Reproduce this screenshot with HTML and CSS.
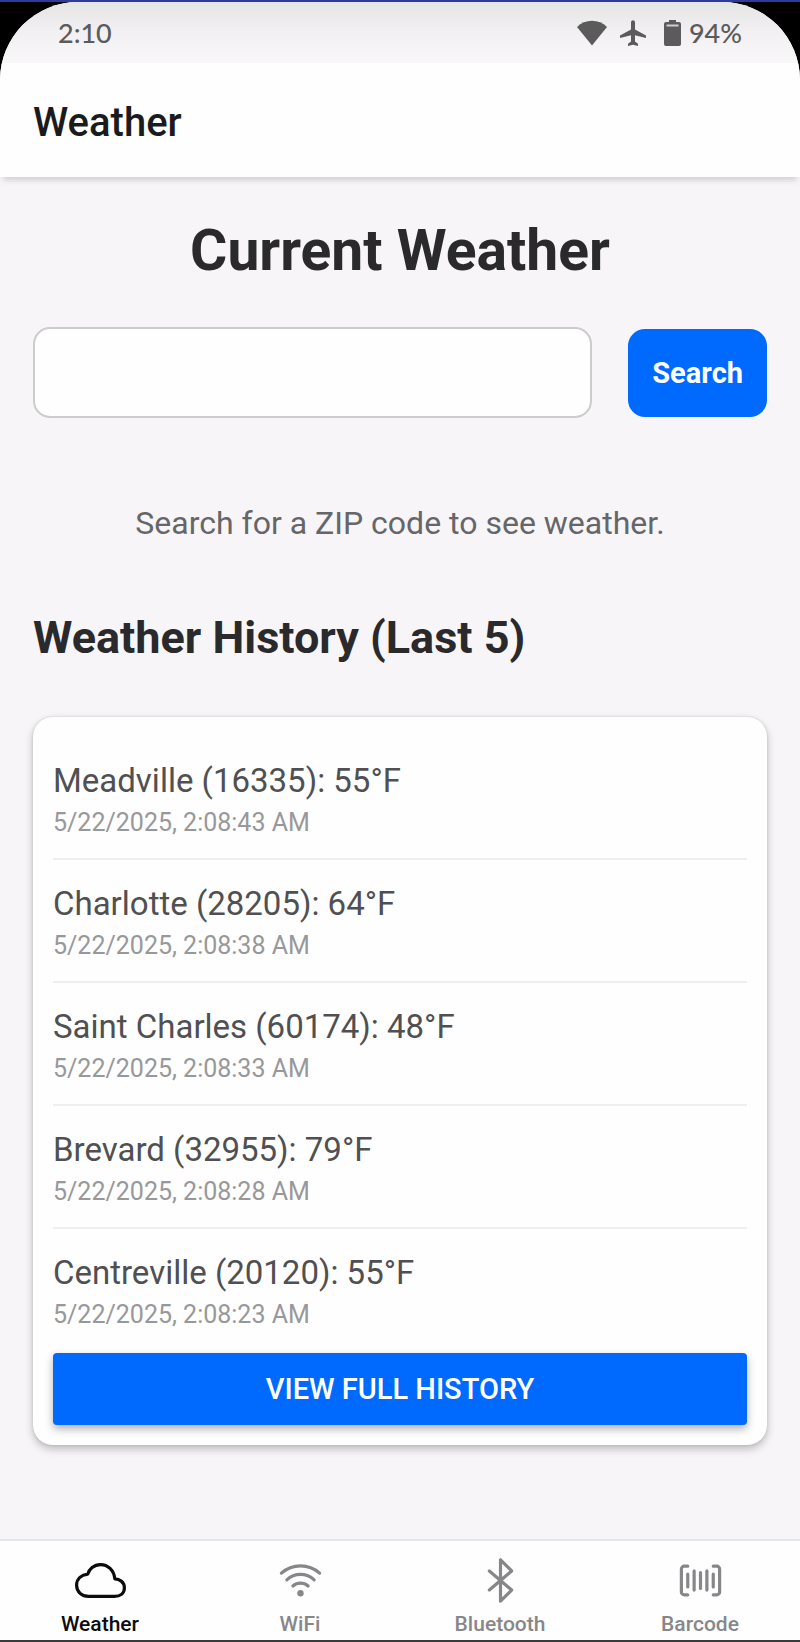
FILE: index.html
```html
<!DOCTYPE html>
<html lang="en">
<head>
<meta charset="utf-8">
<meta name="viewport" content="width=device-width, initial-scale=1">
<title>Weather</title>
<link rel="stylesheet" href="styles.css">
</head>
<body>
<div class="screen">
  <div class="status-bar">
    <span class="clock">2:10</span>
    <div class="status-icons">
      <svg class="status-wifi" viewBox="0 0 30 26" aria-hidden="true"><path d="M0 7C8-1.500 22-1.500 30 7L15 25.500z"/></svg>
      <svg class="status-plane" viewBox="0 0 26 26" aria-hidden="true"><path d="M11 2.200a2 2 0 0 1 4 0V9.500L26 15.500V18L15 15.200V21.500L18 23.800V26L13 24.800L8 26V23.800L11 21.500V15.200L0 18V15.500L11 9.500z"/></svg>
      <svg class="status-battery" viewBox="0 0 17 26" aria-hidden="true"><path d="M5 0h7v2h3a2 2 0 0 1 2 2v20a2 2 0 0 1-2 2H2a2 2 0 0 1-2-2V4a2 2 0 0 1 2-2h3z"/><path class="battery-gap" d="M2.500 4.500h12v2h-12z"/></svg>
      <span>94%</span>
    </div>
  </div>
  <header class="app-header"><div class="app-title">Weather</div></header>
  <main class="content">
    <h1 class="heading">Current Weather</h1>
    <form class="search">
      <input class="search-input" type="text" inputmode="numeric" aria-label="ZIP code">
      <button class="search-button" type="button">Search</button>
    </form>
    <p class="hint">Search for a ZIP code to see weather.</p>
    <h2 class="subheading">Weather History (Last 5)</h2>
    <section class="card">
      <ul class="history">
        <li class="entry"><div class="place">Meadville (16335): 55°F</div><div class="time">5/22/2025, 2:08:43 AM</div></li>
        <li class="entry"><div class="place">Charlotte (28205): 64°F</div><div class="time">5/22/2025, 2:08:38 AM</div></li>
        <li class="entry"><div class="place">Saint Charles (60174): 48°F</div><div class="time">5/22/2025, 2:08:33 AM</div></li>
        <li class="entry"><div class="place">Brevard (32955): 79°F</div><div class="time">5/22/2025, 2:08:28 AM</div></li>
        <li class="entry"><div class="place">Centreville (20120): 55°F</div><div class="time">5/22/2025, 2:08:23 AM</div></li>
      </ul>
      <button class="history-button" type="button">VIEW FULL HISTORY</button>
    </section>
  </main>
  <nav class="tabs">
    <a class="tab tab-active" href="#weather" aria-current="page">
      <svg class="tab-icon" viewBox="0 0 512 512" aria-hidden="true"><path d="M400 240c-8.890-89.540-71-144-144-144-69 0-113.440 48.200-128 96-60 6-112 43.590-112 112 0 66 54 112 120 112h260c55 0 100-27.440 100-88 0-59.820-53-85.760-96-88z"/></svg>
      <span>Weather</span>
    </a>
    <a class="tab" href="#wifi">
      <svg class="tab-icon" viewBox="0 0 512 512" aria-hidden="true"><path d="M332.410 310.590a115 115 0 0 0-152.800 0M393.460 249.540a201.260 201.260 0 0 0-274.920 0M447.720 182.110a288 288 0 0 0-383.440 0"/><circle class="dot" cx="256" cy="384" r="32"/></svg>
      <span>WiFi</span>
    </a>
    <a class="tab" href="#bluetooth">
      <svg class="tab-icon" viewBox="0 0 512 512" aria-hidden="true"><path d="M144 352l224-192L256 48v416l112-112-224-192"/></svg>
      <span>Bluetooth</span>
    </a>
    <a class="tab" href="#barcode">
      <svg class="tab-icon" viewBox="0 0 512 512" aria-hidden="true"><path d="M384 400h35a29 29 0 0 0 29-29V141a29 29 0 0 0-29-29h-35M128 112H93a29 29 0 0 0-29 29v230a29 29 0 0 0 29 29h35M384 192v128M320 160v192M256 176v160M192 160v192M128 192v128"/></svg>
      <span>Barcode</span>
    </a>
  </nav>
</div>
</body>
</html>
```
FILE: styles.css
```css
*, *::before, *::after { box-sizing: border-box; }

body {
  margin: 0;
  min-height: 100vh;
  display: flex;
  background: #000;
  border-top: 2px solid #2b3c9e;
  border-bottom: 2px solid #3a3a3a;
  font-family: Roboto, "Liberation Sans", sans-serif;
  color: #2a2a2c;
}

h1, h2, p, ul { margin: 0; padding: 0; }
button, input { font: inherit; }

.screen {
  flex: 1;
  min-width: 0;
  display: flex;
  flex-direction: column;
  background: #f7f5f8;
  border-radius: 78px 78px 0 0;
  overflow: hidden;
}

.status-bar {
  display: flex;
  justify-content: space-between;
  align-items: center;
  height: 61px;
  padding: 0 58px;
  background: linear-gradient(#e6e5e6, #f2f0f2 50%, #f9f8f9);
  font-family: Lato, Roboto, sans-serif;
  font-size: 27px;
  font-weight: 500;
  line-height: 34px;
  color: #5b5b5b;
}

.status-icons { display: flex; align-items: center; }
.status-icons svg { height: 26px; fill: #5b5b5b; }
.status-wifi { width: 30px; margin-right: 13px; }
.status-plane { width: 26px; margin-right: 18px; }
.status-battery { width: 17px; margin-right: 8px; }
.status-icons .battery-gap { fill: #d0d0d0; }

.app-header {
  padding: 36px 33px 30px;
  background: #fefefe;
  box-shadow: 0 6px 6px -3px rgba(0, 0, 0, 0.16);
}

.app-title {
  font-size: 40px;
  font-weight: 500;
  line-height: 48px;
  color: #1b1b1d;
}

.content { flex: 1; padding: 40px 33px 0; }

.heading {
  font-size: 57px;
  font-weight: 700;
  line-height: 68px;
  text-align: center;
}

.search {
  display: flex;
  align-items: center;
  gap: 36px;
  margin-top: 42px;
}

.search-input {
  flex: 1;
  min-width: 0;
  height: 91px;
  padding: 0 20px;
  border: 2px solid #cccccd;
  border-radius: 17px;
  background: #fefefe;
  font-size: 33px;
}

.search-button {
  height: 88px;
  padding: 0 24px;
  border: 0;
  border-radius: 17px;
  background: #006aff;
  color: #fff;
  font-size: 29px;
  font-weight: 700;
}

.hint {
  margin-top: 85px;
  font-size: 32px;
  line-height: 40px;
  text-align: center;
  color: #666668;
}

.subheading {
  margin-top: 68px;
  font-size: 45px;
  font-weight: 700;
  line-height: 53px;
}

.card {
  margin-top: 53px;
  padding: 20px;
  border-radius: 20px;
  background: #fefefe;
  box-shadow: 0 4px 8px rgba(0, 0, 0, 0.24), 0 0 3px rgba(0, 0, 0, 0.12);
}

.history { list-style: none; }

.entry {
  padding: 21px 0 16px;
  border-bottom: 2px solid #eeedef;
}
.entry:last-child { border-bottom: 0; }

.place {
  font-size: 33px;
  line-height: 46px;
  color: #505052;
}

.time {
  font-size: 25px;
  line-height: 38px;
  color: #98989a;
}

.history-button {
  display: block;
  width: 100%;
  height: 72px;
  margin-top: 3px;
  border: 0;
  border-radius: 4px;
  background: #006aff;
  box-shadow: 0 4px 8px rgba(0, 0, 0, 0.3);
  color: #fff;
  font-size: 29px;
  font-weight: 500;
}

.tabs {
  display: grid;
  grid-template-columns: repeat(4, 1fr);
  padding: 14px 0 3px;
  border-top: 2px solid #e6e5e7;
  background: #fefefe;
}

.tab {
  display: flex;
  flex-direction: column;
  align-items: center;
  gap: 6px;
  color: #87878a;
  font-size: 21px;
  font-weight: 500;
  line-height: 25px;
  text-decoration: none;
}
.tab-active { color: #0c0c0e; }

.tab-icon {
  width: 51px;
  height: 51px;
  fill: none;
  stroke: currentColor;
  stroke-width: 32px;
  stroke-linecap: round;
  stroke-linejoin: round;
}
.tab-icon .dot { fill: currentColor; stroke: none; }
```
